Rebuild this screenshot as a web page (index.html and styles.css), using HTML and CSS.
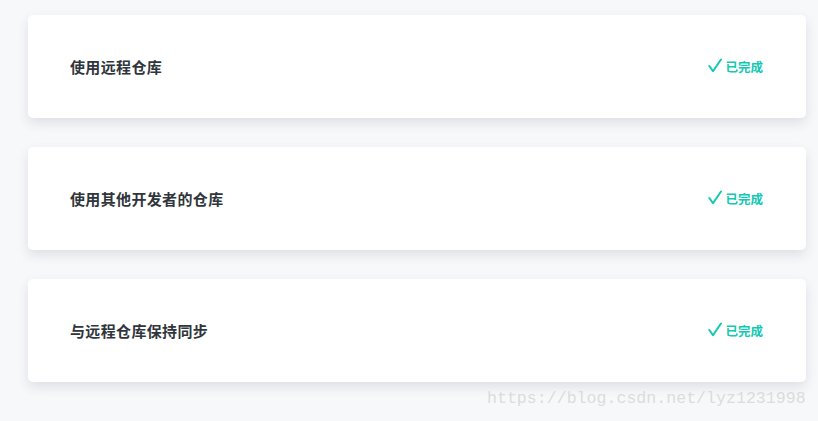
FILE: index.html
```html
<!DOCTYPE html>
<html lang="zh">
<head>
<meta charset="utf-8">
<link rel="stylesheet" href="styles.css">
</head>
<body>
<div class="page">
  <div class="card">
    <span class="title">使用远程仓库</span>
    <span class="status"><svg class="check" width="14" height="15" viewBox="0 0 14 15"><path d="M1.3 8 L5 13.2 L13 1.5" fill="none" stroke="currentColor" stroke-width="2" stroke-linecap="round" stroke-linejoin="round"/></svg>已完成</span>
  </div>
  <div class="card">
    <span class="title">使用其他开发者的仓库</span>
    <span class="status"><svg class="check" width="14" height="15" viewBox="0 0 14 15"><path d="M1.3 8 L5 13.2 L13 1.5" fill="none" stroke="currentColor" stroke-width="2" stroke-linecap="round" stroke-linejoin="round"/></svg>已完成</span>
  </div>
  <div class="card">
    <span class="title">与远程仓库保持同步</span>
    <span class="status"><svg class="check" width="14" height="15" viewBox="0 0 14 15"><path d="M1.3 8 L5 13.2 L13 1.5" fill="none" stroke="currentColor" stroke-width="2" stroke-linecap="round" stroke-linejoin="round"/></svg>已完成</span>
  </div>
</div>
<div class="watermark">https://blog.csdn.net/lyz1231998</div>
</body>
</html>
```
FILE: styles.css
```css
html, body {
  margin: 0;
  padding: 0;
  background: #f7f8fa;
  width: 818px;
  height: 421px;
  overflow: hidden;
  font-family: "Noto Sans CJK SC", "Noto Sans", sans-serif;
}
.page {
  display: flex;
  flex-direction: column;
  gap: 29px;
  padding: 15px 12px 0 28px;
}
.card {
  height: 103px;
  background: #fff;
  border-radius: 5px;
  box-shadow: 0 5px 12px rgba(40, 50, 70, 0.12);
  display: flex;
  align-items: center;
  justify-content: space-between;
  padding: 0 43px 0 42px;
}
.title {
  font-size: 15px;
  font-weight: 700;
  color: #30353c;
  letter-spacing: 0.35px;
}
.status {
  display: flex;
  align-items: center;
  gap: 3px;
  font-size: 12.5px;
  font-weight: 700;
  color: #14c8b3;
}
.check {
  display: block;
  margin-top: -2px;
}
.watermark {
  position: absolute;
  left: 487px;
  top: 389px;
  font-family: "Liberation Mono", monospace;
  font-size: 16.6px;
  color: #dcdcdc;
  white-space: nowrap;
}
```
